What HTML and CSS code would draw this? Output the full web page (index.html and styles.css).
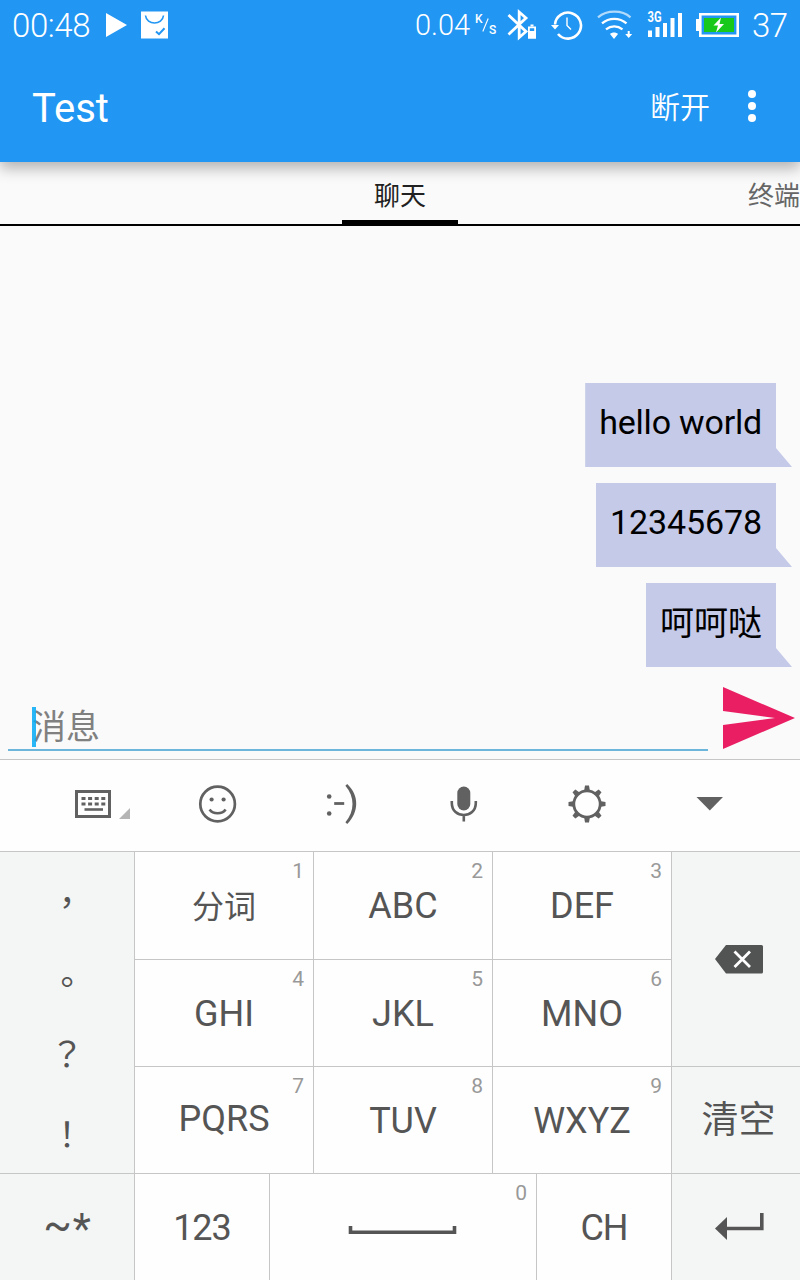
FILE: index.html
```html
<!DOCTYPE html>
<html lang="zh-CN">
<head>
<meta charset="utf-8">
<title>Test</title>
<link rel="stylesheet" href="styles.css">
</head>
<body>
<div class="screen">
  <header class="appbar">
    <div class="status">
      <span class="clock">00:48</span>
      <svg class="notices" width="70" height="50" viewBox="102 0 70 50"><path fill="#fff" d="M106 13l21 12-21 12zM141 11.500h27v27h-27z"/><path d="M145.500 15.500c1 10 17 10 18 0" fill="none" stroke="#2196f3" stroke-width="1.600"/><path d="M156 31.500l3 2.700 5.500-6" fill="none" stroke="#2196f3" stroke-width="2"/></svg>
      <span class="speed">0.04</span>
      <span class="unit"><span class="unit-k">K</span><svg width="7" height="14" viewBox="0 0 7 14"><path d="M.8 13.500L6.200.5" stroke="#fff" stroke-width="1.100"/></svg><span class="unit-s">S</span></span>
      <svg class="signals" width="240" height="50" viewBox="504 0 240 50">
        <g fill="none" stroke="#fff">
          <path stroke-width="2.800" d="M508.500 15l17.500 16.500-6.800 6V12l6.800 6-17.500 16.500"/>
          <path stroke-width="1.800" d="M528.900 27.400h6.200v10.500h-6.200z"/>
          <path stroke-width="2.600" d="M555 24.500a13 13 0 1 1 3 9.500"/>
          <path stroke-width="1.400" d="M567 17.500v8l4 4"/>
          <path stroke-width="2.300" stroke-opacity=".65" d="M598 17.300c9-7.500 24-7.500 32.500 0"/>
          <path stroke-width="2.300" d="M602 23.300c7-6 17.500-6 24.500 0M606 29.300c5-4 11.500-4 16.500 0"/>
          <path stroke-width="2.600" d="M700.300 14.300h37.400v21.400h-37.400z"/>
        </g>
        <text class="net" x="647.500" y="22" textLength="14" lengthAdjust="spacingAndGlyphs">3G</text>
        <g fill="#fff">
          <path d="M551 25h8l-4 4.500zM530.500 24.500h3v2h-3zM529 31h6v7h-6z"/>
          <path d="M610 34c2-2 6-2 8 0l-4 5zM627.700 31h2v3h2.500l-3.500 4-3.500-4h2.500z"/>
          <path d="M648 30.500h4v6.500h-4zM655.500 27h4v10h-4zM663 23h4v14h-4zM670.500 18h4v19h-4zM678 13h4v24h-4zM696 19h3.500v12H696z"/>
        </g>
        <path fill="#18c91b" d="M704 18h30v14h-30z"/><path fill="#fff" d="M721 17.500l-7.500 8h4.500l-2 7 8-8.500h-4.500z"/>
      </svg>
      <span class="level">37</span>
    </div>
    <div class="toolbar">
      <h1 class="title">Test</h1>
      <span class="action">断开</span>
      <svg class="more" width="8" height="32" viewBox="0 0 8 32" fill="#fff"><circle cx="4" cy="4" r="4"/><circle cx="4" cy="16" r="4"/><circle cx="4" cy="28" r="4"/></svg>
    </div>
  </header>
  <nav class="tabs"><span></span><span class="tab tab-on">聊天</span><span class="tab tab-next">终端</span></nav>
  <main class="chat">
    <div class="bubble latin"><span>hello world</span></div>
    <div class="bubble digits"><span>12345678</span></div>
    <div class="bubble"><span>呵呵哒</span></div>
  </main>
  <div class="compose">
    <div class="field"><span class="hint">消息</span><i class="caret"></i></div>
    <svg class="send" width="72" height="62" viewBox="0 0 72 62"><path fill="#e91e63" d="M0 0l72 31L0 62V38l52-7L0 24z"/></svg>
  </div>
  <section class="keyboard">
    <div class="tools">
      <svg width="60" height="60" viewBox="63 774 60 60" overflow="visible"><path fill="none" stroke="#616161" stroke-width="3" d="M76.500 791.500h33v25h-33z"/><path stroke="#616161" stroke-width="3" stroke-dasharray="4 2.600" d="M81.500 798.500h24M81.500 804h24"/><path stroke="#616161" stroke-width="2.600" d="M84.500 809.500h18.500"/><path fill="#b5b5b5" d="M130 808v11h-11z"/></svg>
      <svg width="60" height="60" viewBox="186.400 774 60 60"><g fill="none" stroke="#616161" stroke-width="2.700"><circle cx="218" cy="804" r="17.300"/><path d="M210 809.500c3.500 5 12.500 5 16 0"/></g><circle fill="#616161" cx="212" cy="799.500" r="2.100"/><circle fill="#616161" cx="224" cy="799.500" r="2.100"/></svg>
      <svg width="60" height="60" viewBox="309.800 774 60 60"><circle fill="#616161" cx="329" cy="796.500" r="2.300"/><circle fill="#616161" cx="329" cy="813.500" r="2.300"/><path fill="none" stroke="#616161" stroke-width="2.800" d="M334 803.500h10"/><path fill="#616161" d="M347 784c12 11 12 28 0 40l-1.800-1.700c9.500-11 9.500-25.500 0-36.600z"/></svg>
      <svg width="60" height="60" viewBox="433.200 774 60 60"><rect x="457.500" y="786.500" width="13" height="24" rx="6.500" fill="#616161"/><path fill="none" stroke="#616161" stroke-width="2.600" d="M452 801v2c0 16 24 16 24 0v-2M464 815v6.500"/></svg>
      <svg width="60" height="60" viewBox="557 774 60 60"><circle cx="587" cy="804" r="13.200" fill="none" stroke="#616161" stroke-width="2.800"/><g fill="#616161"><path id="tooth" d="M584 791.500l1-6h4l1 6z"/><use href="#tooth" transform="rotate(45 587 804)"/><use href="#tooth" transform="rotate(90 587 804)"/><use href="#tooth" transform="rotate(135 587 804)"/><use href="#tooth" transform="rotate(180 587 804)"/><use href="#tooth" transform="rotate(225 587 804)"/><use href="#tooth" transform="rotate(270 587 804)"/><use href="#tooth" transform="rotate(315 587 804)"/></g></svg>
      <svg width="60" height="60" viewBox="680 774 60 60"><path fill="#616161" d="M696.500 797h26.500l-13.200 13.500z"/></svg>
    </div>
    <div class="keys">
      <div class="key side marks"><span class="low">，</span><span class="low">。</span><span>？</span><span>！</span></div>
      <div class="pad">
        <div class="key"><small>1</small><span class="cn">分词</span></div>
        <div class="key"><small>2</small>ABC</div>
        <div class="key"><small>3</small>DEF</div>
        <div class="key mid"><small>4</small>GHI</div>
        <div class="key mid"><small>5</small>JKL</div>
        <div class="key mid"><small>6</small>MNO</div>
        <div class="key"><small>7</small><span class="raised">PQRS</span></div>
        <div class="key mid"><small>8</small>TUV</div>
        <div class="key mid"><small>9</small>WXYZ</div>
      </div>
      <div class="right">
        <div class="key side"><svg width="60" height="40" viewBox="706 939 60 40"><path fill="#525453" d="M715 959l11-14h35.500q1.500 0 1.500 1.500v25.500q0 1.500-1.500 1.500H726z"/><path stroke="#fff" stroke-width="2.800" d="M734.500 951.500l15.500 15.500M750 951.500L734.500 967"/></svg></div>
        <div class="key side clear">清空</div>
      </div>
    </div>
    <div class="keys last">
      <div class="key side sym"><span class="tilde">~</span><span class="star">*</span></div>
      <div class="key num mid">123</div>
      <div class="key"><small>0</small><svg class="space" width="120" height="40" viewBox="343 1207 120 40"><path fill="none" stroke="#555" stroke-width="3.600" d="M350.500 1227v6.200h104V1227"/></svg></div>
      <div class="key lang mid">CH</div>
      <div class="key side"><svg width="60" height="40" viewBox="706 1207 60 40"><path fill="#555" d="M715 1228.500l12-11.500v23z"/><path fill="none" stroke="#555" stroke-width="3.600" d="M726 1228.500h35.800V1213"/></svg></div>
    </div>
  </section>
</div>
</body>
</html>
```
FILE: styles.css
```css
* { box-sizing: border-box; }
body { margin: 0; font-family: Roboto, "Noto Sans CJK SC", sans-serif; }
svg { display: block; flex: none; }
.screen { width: 800px; height: 1280px; display: flex; flex-direction: column; background: #fafafa; overflow: hidden; }

.appbar { height: 162px; background: #2196f3; color: #fff; box-shadow: 0 6px 14px rgba(0, 0, 0, .3); z-index: 1; flex: none; }
.status { height: 50px; display: flex; align-items: center; font-weight: 300; white-space: nowrap; }
.clock { width: 90px; margin-left: 12px; font-size: 33px; letter-spacing: -.4px; line-height: 50px; padding-top: 2px; }
.speed { width: 61px; margin-left: 242px; font-size: 29px; line-height: 50px; padding-left: 1px; }
.unit { width: 29px; height: 26px; display: flex; font-size: 12px; font-weight: 500; line-height: 12px; }
.unit svg { margin-top: 6px; }
.unit-k { width: 7px; padding-top: 1px; }
.unit-s { margin-top: 12px; }
.net { font-size: 14px; font-weight: 700; fill: #fff; }
.level { margin-left: 8px; font-size: 33px; letter-spacing: -.5px; line-height: 50px; padding-top: 2px; }
.toolbar { height: 112px; display: flex; align-items: center; padding: 0 44px 0 32px; }
.title { margin: 5px auto 0 0; font-size: 40px; font-weight: 400; line-height: 48px; }
.action { font-size: 30px; line-height: 40px; margin: 3px 38px 0 0; font-weight: 350; }

.tabs { height: 64px; flex: none; display: grid; grid-template-columns: 342px 116px 1fr; grid-template-rows: 62px; border-bottom: 2px solid #000; font-size: 26px; line-height: 38px; }
.tab { padding-top: 15px; }
.tab-on { text-align: center; color: #212121; border-bottom: 4px solid #000; }
.tab-next { padding-left: 290px; color: #666; white-space: nowrap; overflow: hidden; }

.chat { height: 457px; flex: none; display: flex; flex-direction: column; justify-content: flex-end; align-items: flex-end; gap: 16px; padding: 0 8px 16px 0; }
.bubble { height: 84px; padding: 20px 30px 0 14px; background: #c5cae9; clip-path: polygon(0 0, calc(100% - 16px) 0, calc(100% - 16px) 65px, 100% 100%, 0 100%); font-size: 34px; line-height: 40px; color: #000; }
.latin, .digits { padding-top: 19px; }
.latin { letter-spacing: -.2px; }
.digits { letter-spacing: -.1px; }
.compose { height: 76px; flex: none; display: flex; padding: 4px 5px 0 8px; }
.field { position: relative; width: 700px; height: 64px; padding: 18px 0 0 24px; border-bottom: 2px solid #6bb6da; font-size: 34px; line-height: 44px; color: #808080; }
.caret { position: absolute; left: 24px; top: 20px; width: 4px; height: 40px; background: #03a9f4; opacity: .85; }
.send { margin-left: 15px; }

.keyboard { height: 521px; flex: none; border-top: 1px solid #c6c6c6; background: #fefefe; color: #555; }
.tools { height: 91px; display: flex; align-items: center; justify-content: space-between; padding: 0 60px 3px 63px; }
.keys { display: grid; grid-template-columns: 134px 536px 128px; gap: 1px; padding-top: 1px; background: #c6c6c6; height: 322px; }
.key { position: relative; display: flex; align-items: center; justify-content: center; background: #fefefe; font-size: 36px; line-height: 42px; }
.key small { position: absolute; right: 9px; top: 6px; font-size: 21px; line-height: 26px; color: #999; }
.mid { padding-top: 2px; }
.side { background: #f4f6f5; }
.pad { display: grid; grid-template-columns: repeat(3, 178px); grid-template-rows: 107px 106px 106px; gap: 1px; }
.right { display: grid; grid-template-rows: 214px 106px; gap: 1px; }
.marks { flex-direction: column; justify-content: flex-start; font-family: "Noto Sans CJK TC", sans-serif; font-size: 34px; }
.marks span { height: 80px; line-height: 82px; }
.marks .low { padding-top: 8px; }
.cn { font-size: 32px; padding-top: 2px; }
.raised { padding-bottom: 2px; }
.clear { font-size: 37px; padding: 2px 0 0 5px; }
.last { grid-template-columns: 134px 134px 266px 134px 128px; height: 107px; }
.sym { font-size: 42px; }
.tilde { padding: 0 1px 4px 0; }
.star { padding-top: 3px; }
.num, .lang { letter-spacing: -1px; }
.space { margin-top: -3px; }
```
